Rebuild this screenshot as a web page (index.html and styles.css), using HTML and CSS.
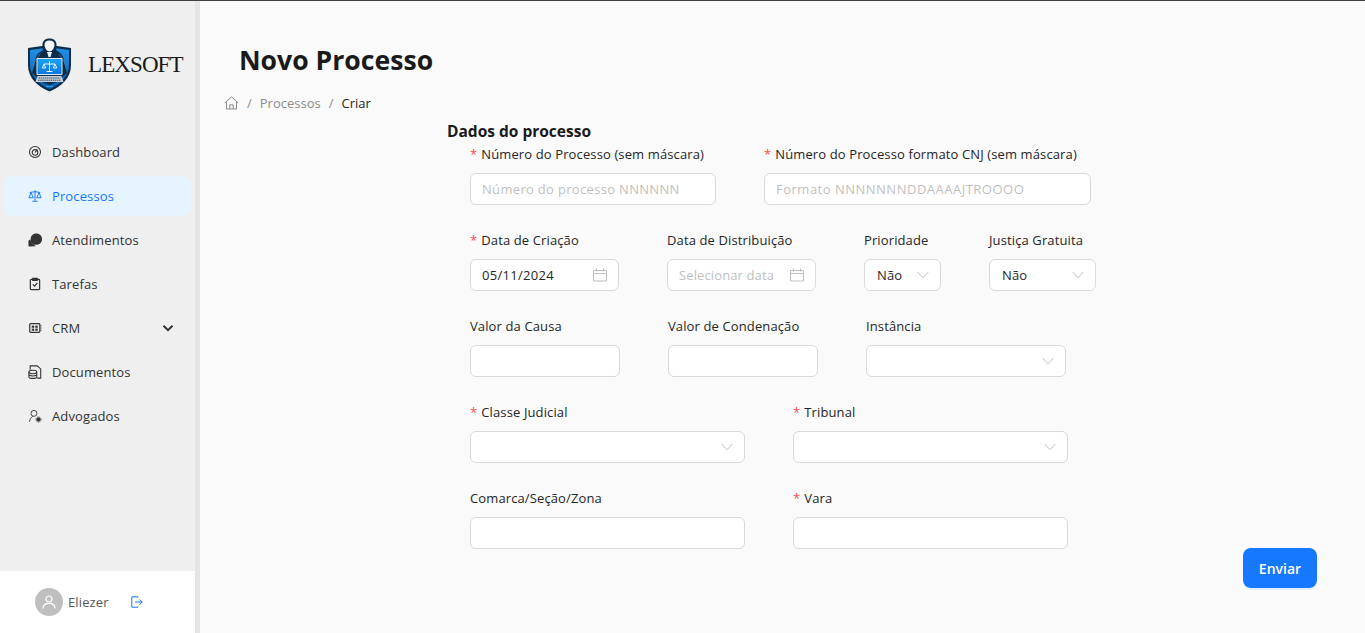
FILE: index.html
```html
<!DOCTYPE html>
<html lang="pt-BR">

<head>
    <meta charset="UTF-8">
    <meta name="viewport" content="width=device-width, initial-scale=1.0">
    <title>Novo Processo</title>
    <link rel="stylesheet" href="styles.css">
</head>

<body>
    <aside class="sidebar">
        <div class="logo">
            <svg class="logo-mark" width="45" height="54" viewBox="0 0 45 54">
                <defs>
                    <linearGradient id="shieldFill" x1="0" y1="0" x2="0" y2="1">
                        <stop offset="0" stop-color="#1f8fe6" />
                        <stop offset="1" stop-color="#0b5ea8" />
                    </linearGradient>
                    <linearGradient id="screenFill" x1="0" y1="0" x2="0" y2="1">
                        <stop offset="0" stop-color="#19a3f5" />
                        <stop offset="1" stop-color="#0a78e0" />
                    </linearGradient>
                </defs>
                <path d="M1 10 L15 8 L30 8 L44 10 L44 27 C44 40 34 49 22.500 53.500 C11 49 1 40 1 27 Z" fill="#0d2c4a" />
                <path d="M3 12 L14 10.500 L31 10.500 L42 12 L42 27 C42 38 33 46.500 22.500 51 C12 46.500 3 38 3 27 Z" fill="url(#shieldFill)" />
                <path d="M8 25 C8 18 11 14 17 12 L28 12 C34 14 37 18 37 25 L40 35 L30 44 L22.500 47 L15 44 L5 35 Z" fill="#0d2c4a" />
                <path d="M15.500 8 C15 3 18 0.500 22.500 0.500 C27 0.500 30 3 29.500 8 L29 15 L16 15 Z" fill="#0d2c4a" />
                <path d="M17.500 7 C17.300 4 19 2.500 22.500 2.500 C26 2.500 27.700 4 27.500 7 C27.300 10 25 13.500 22.500 13.500 C20 13.500 17.700 10 17.500 7 Z" fill="#f4f7fa" />
                <path d="M20 14 L25 14 L23.500 19 L21.500 19 Z" fill="#e8eef3" />
                <path d="M13 16 L5.500 27 M32 16 L39.500 27" stroke="#5d7f9b" stroke-width="0.700" />
                <rect x="9.500" y="20" width="26" height="17" rx="1" fill="#dfeaf3" />
                <rect x="10.500" y="21" width="24" height="15" fill="url(#screenFill)" />
                <path d="M22.500 23 V33 M17 26 H28 M15.300 30 L17 26 L18.700 30 Z M26.300 30 L28 26 L29.700 30 Z M19.500 33.500 H25.500" stroke="#fff" stroke-width="0.900" fill="none" />
                <path d="M10.500 38 H34.500 L36.500 44 H8.500 Z" fill="#c9d3dc" />
                <path d="M11.500 40 H33.500 M11 42.200 H34" stroke="#22384e" stroke-width="0.900" stroke-dasharray="1.500 0.600" />
                <path d="M19 48.500 H26" stroke="#2aa0f0" stroke-width="1.200" />
            </svg>
            <span class="logo-text">LEXSOFT</span>
        </div>

        <nav class="menu">
            <a class="menu-item" href="#">
                <svg class="menu-icon" viewBox="0 0 16 16" fill="none" stroke="currentColor" stroke-width="1.200">
                    <circle cx="8" cy="8" r="6.300" />
                    <circle cx="8" cy="8.500" r="3.200" />
                    <path d="M8 8.500 L10.500 5" />
                </svg>
                <span>Dashboard</span>
            </a>
            <a class="menu-item active" href="#">
                <svg class="menu-icon" viewBox="0 0 16 16" fill="none" stroke="currentColor" stroke-width="1.100">
                    <path d="M8 1.500 V13.500 M5 14 H11 M2 4 L8 3 L14 4" />
                    <path d="M3.500 4 L1 10 H6 Z M12.500 4 L10 10 H15 Z" />
                </svg>
                <span>Processos</span>
            </a>
            <a class="menu-item" href="#">
                <svg class="menu-icon" viewBox="0 0 16 16" fill="currentColor">
                    <path d="M9.500 0.500 C13.500 0.500 16 3.500 16 7 C16 10.800 13 13.300 9.500 13.300 L8 13.300 C5 13.300 3 10.300 3 7 C3 3.500 5.500 0.500 9.500 0.500 Z" />
                    <path d="M0.500 9.500 C0.500 8.500 1.500 7.800 2.500 7.800 L5 12 L9 15 L1.500 15.500 C0.800 15.500 0.500 15 0.500 14.400 Z" />
                </svg>
                <span>Atendimentos</span>
            </a>
            <a class="menu-item" href="#">
                <svg class="menu-icon" viewBox="0 0 16 16" fill="none" stroke="currentColor" stroke-width="1.400">
                    <rect x="2.700" y="2.700" width="10.600" height="11.800" rx="1" />
                    <path d="M5.500 1.500 H10.500 V3.800 H5.500 Z" fill="currentColor" />
                    <path d="M5.500 8.500 L7.500 10.500 L10.700 6.800" />
                </svg>
                <span>Tarefas</span>
            </a>
            <a class="menu-item" href="#">
                <svg class="menu-icon" viewBox="0 0 16 16" fill="none" stroke="currentColor" stroke-width="1.400">
                    <rect x="2" y="3" width="11.500" height="10" rx="1" />
                    <path d="M14 5.500 H15.500 M14 8 H15.500 M14 10.500 H15.500" stroke-width="1" />
                    <rect x="4.300" y="5.300" width="2.800" height="2.400" fill="currentColor" stroke="none" />
                    <rect x="8.300" y="5.300" width="2.800" height="2.400" fill="currentColor" stroke="none" />
                    <rect x="4.300" y="8.700" width="2.800" height="2.400" fill="currentColor" stroke="none" />
                    <rect x="8.300" y="8.700" width="2.800" height="2.400" fill="currentColor" stroke="none" />
                </svg>
                <span>CRM</span>
                <svg class="menu-arrow" width="12" height="12" viewBox="0 0 12 12" fill="none" stroke="currentColor" stroke-width="2">
                    <path d="M1.500 3.800 L6 8.200 L10.500 3.800" />
                </svg>
            </a>
            <a class="menu-item" href="#">
                <svg class="menu-icon" viewBox="0 0 16 16" fill="none" stroke="currentColor" stroke-width="1.200">
                    <path d="M2.500 5.500 V1 H10.500 L14.500 4.500 V15 H10.500" />
                    <ellipse cx="5.500" cy="8" rx="4.500" ry="1.900" />
                    <path d="M1 8 V13.300 C1 14.500 3 15.300 5.500 15.300 C8 15.300 10 14.500 10 13.300 V8 M1 10.700 C1 11.900 3 12.600 5.500 12.600 C8 12.600 10 11.900 10 10.700" />
                </svg>
                <span>Documentos</span>
            </a>
            <a class="menu-item" href="#">
                <svg class="menu-icon" viewBox="0 0 16 16" fill="none" stroke="currentColor" stroke-width="1">
                    <circle cx="6.800" cy="5" r="3.400" />
                    <path d="M1.800 14.500 C2 11.500 3.500 9.500 5.500 8.500" />
                    <circle cx="12" cy="12" r="2" fill="currentColor" />
                    <circle cx="12" cy="12" r="3" stroke-dasharray="1 1" />
                </svg>
                <span>Advogados</span>
            </a>
        </nav>

        <div class="user-box">
            <span class="avatar">
                <svg width="14" height="14" viewBox="0 0 14 14" fill="none" stroke="#fff" stroke-width="1.200">
                    <circle cx="7" cy="4" r="3" />
                    <path d="M1 13.500 C1 10 3.500 8.300 7 8.300 C10.500 8.300 13 10 13 13.500" />
                </svg>
            </span>
            <span class="user-name">Eliezer</span>
            <svg class="logout" width="12" height="12" viewBox="0 0 12 12" fill="none" stroke="#1677ff" stroke-width="1">
                <path d="M7 1.500 V0.800 H0.800 V11.200 H7 V10.500 M4 6 H11.200 M8.700 3.500 L11.200 6 L8.700 8.500" />
            </svg>
        </div>
    </aside>

    <main class="content">
        <h1 class="page-title">Novo Processo</h1>

        <div class="breadcrumb">
            <svg width="15" height="14" viewBox="0 0 15 14" fill="none" stroke="#8c8c8c" stroke-width="1">
                <path d="M0.700 7 L7.500 0.800 L14.300 7 M2.500 5.500 V13 H12.500 V5.500 M5.800 13 V8.800 H9.200 V13" />
            </svg>
            <span class="sep">/</span>
            <a href="#">Processos</a>
            <span class="sep">/</span>
            <span class="current">Criar</span>
        </div>

        <div class="form-area">
            <form class="process-form" action="#" method="post">
                <h2>Dados do processo</h2>
                <div class="form-fields">
                    <div class="form-row">
                        <div class="field w-246">
                            <label class="required">Número do Processo (sem máscara)</label>
                            <input class="ph-number" type="text" placeholder="Número do processo NNNNNN">
                        </div>
                        <div class="field w-327">
                            <label class="required">Número do Processo formato CNJ (sem máscara)</label>
                            <input class="ph-cnj" type="text" placeholder="Formato NNNNNNNDDAAAAJTROOOO">
                        </div>
                    </div>

                    <div class="form-row">
                        <div class="field w-149">
                            <label class="required">Data de Criação</label>
                            <div class="control date-control">
                                <span class="date-value">05/11/2024</span>
                                <svg class="calendar" width="14" height="14" viewBox="0 0 14 14" fill="none" stroke="#bfbfbf" stroke-width="1">
                                    <path d="M0.500 2.500 H13.500 V13 H0.500 Z M0.500 5.500 H13.500 M3.500 0.500 V3.500 M10.500 0.500 V3.500" />
                                </svg>
                            </div>
                        </div>
                        <div class="field w-149">
                            <label>Data de Distribuição</label>
                            <div class="control date-control">
                                <span class="placeholder">Selecionar data</span>
                                <svg class="calendar" width="14" height="14" viewBox="0 0 14 14" fill="none" stroke="#bfbfbf" stroke-width="1">
                                    <path d="M0.500 2.500 H13.500 V13 H0.500 Z M0.500 5.500 H13.500 M3.500 0.500 V3.500 M10.500 0.500 V3.500" />
                                </svg>
                            </div>
                        </div>
                        <div class="field w-77">
                            <label>Prioridade</label>
                            <div class="control">
                                <span>Não</span>
                                <svg class="chevron" width="12" height="8" viewBox="0 0 12 8" fill="none" stroke="#bfbfbf" stroke-width="1">
                                    <path d="M0.700 1 L6 6.800 L11.300 1" />
                                </svg>
                            </div>
                        </div>
                        <div class="field w-107">
                            <label>Justiça Gratuita</label>
                            <div class="control">
                                <span>Não</span>
                                <svg class="chevron" width="12" height="8" viewBox="0 0 12 8" fill="none" stroke="#bfbfbf" stroke-width="1">
                                    <path d="M0.700 1 L6 6.800 L11.300 1" />
                                </svg>
                            </div>
                        </div>
                    </div>

                    <div class="form-row">
                        <div class="field w-150">
                            <label>Valor da Causa</label>
                            <input type="text">
                        </div>
                        <div class="field w-150">
                            <label>Valor de Condenação</label>
                            <input type="text">
                        </div>
                        <div class="field w-200">
                            <label>Instância</label>
                            <div class="control">
                                <span></span>
                                <svg class="chevron" width="12" height="8" viewBox="0 0 12 8" fill="none" stroke="#bfbfbf" stroke-width="1">
                                    <path d="M0.700 1 L6 6.800 L11.300 1" />
                                </svg>
                            </div>
                        </div>
                    </div>

                    <div class="form-row">
                        <div class="field w-275">
                            <label class="required">Classe Judicial</label>
                            <div class="control">
                                <span></span>
                                <svg class="chevron" width="12" height="8" viewBox="0 0 12 8" fill="none" stroke="#bfbfbf" stroke-width="1">
                                    <path d="M0.700 1 L6 6.800 L11.300 1" />
                                </svg>
                            </div>
                        </div>
                        <div class="field w-275">
                            <label class="required">Tribunal</label>
                            <div class="control">
                                <span></span>
                                <svg class="chevron" width="12" height="8" viewBox="0 0 12 8" fill="none" stroke="#bfbfbf" stroke-width="1">
                                    <path d="M0.700 1 L6 6.800 L11.300 1" />
                                </svg>
                            </div>
                        </div>
                    </div>

                    <div class="form-row">
                        <div class="field w-275">
                            <label>Comarca/Seção/Zona</label>
                            <input type="text">
                        </div>
                        <div class="field w-275">
                            <label class="required">Vara</label>
                            <input type="text">
                        </div>
                    </div>
                </div>
            </form>

            <button class="submit-btn" type="submit">Enviar</button>
        </div>
    </main>
</body>

</html>
```

FILE: styles.css
```css
* {
    margin: 0;
    padding: 0;
    box-sizing: border-box;
}

html,
body {
    height: 100%;
}

body {
    display: flex;
    height: 633px;
    overflow: hidden;
    border-top: 1px solid #3f3f3f;
    background-color: #fafafa;
    font-family: "Open Sans", "Liberation Sans", sans-serif;
    font-size: 13px;
    line-height: 22px;
    letter-spacing: 0.12px;
    color: #262626;
}

a {
    text-decoration: none;
    color: inherit;
}

/* sidebar */
.sidebar {
    display: flex;
    flex-direction: column;
    flex: 0 0 200px;
    width: 200px;
    background-color: #efefef;
    border-right: 5px solid #e5e5e5;
}

.logo {
    display: flex;
    align-items: center;
    height: 127px;
    padding-left: 27px;
}

.logo-mark {
    flex-shrink: 0;
}

.logo-text {
    margin-left: 16px;
    font-family: "Liberation Serif", serif;
    font-size: 23px;
    letter-spacing: -0.9px;
    color: #1a1a1a;
}

.menu {
    flex: 1;
}

.menu-item {
    display: flex;
    align-items: center;
    height: 40px;
    margin: 4px;
    padding-left: 24px;
    border-radius: 8px;
    color: #333;
}

.menu-item.active {
    background-color: #e6f4ff;
    color: #1677ff;
}

.menu-icon {
    flex: 0 0 14px;
    width: 14px;
    height: 14px;
    margin-right: 10px;
}

.menu-arrow {
    margin-left: auto;
    margin-right: 17px;
}

.user-box {
    display: flex;
    align-items: center;
    height: 62px;
    padding-left: 35px;
    background-color: #fff;
    color: #595959;
}

.avatar {
    display: flex;
    align-items: center;
    justify-content: center;
    width: 28px;
    height: 28px;
    border-radius: 50%;
    background-color: #bfbfbf;
}

.user-name {
    margin-left: 5px;
}

.logout {
    margin-left: 22px;
}

/* main */
.content {
    flex: 1;
    display: flex;
    flex-direction: column;
    padding-left: 24px;
}

.page-title {
    margin: 38px 0 0 15px;
    font-size: 26.6px;
    line-height: 42px;
    font-weight: 700;
    letter-spacing: 0;
    color: #1a1a1a;
}

.breadcrumb {
    display: flex;
    align-items: center;
    height: 22px;
    margin-top: 11px;
    letter-spacing: 0;
    color: #8c8c8c;
}

.breadcrumb .sep {
    margin: 0 8px;
}

.breadcrumb .current {
    color: #262626;
}

.form-area {
    display: flex;
    align-items: flex-end;
    justify-content: space-between;
    padding-right: 48px;
}

.process-form {
    margin-left: 223px;
    margin-top: 6px;
}

.process-form h2 {
    font-size: 15.5px;
    line-height: 22px;
    font-weight: 700;
    letter-spacing: 0;
    color: #1a1a1a;
}

.form-fields {
    padding-left: 23px;
    margin-top: 1px;
}

.form-row {
    display: flex;
    gap: 48px;
    margin-bottom: 24px;
}

.field label {
    display: block;
    padding-bottom: 8px;
    white-space: nowrap;
    color: #262626;
}

.required::before {
    content: "*";
    margin-right: 4px;
    color: #ff4d4f;
}

.field input,
.control {
    display: flex;
    align-items: center;
    justify-content: space-between;
    width: 100%;
    height: 32px;
    padding: 0 12px;
    border: 1px solid #d9d9d9;
    border-radius: 6px;
    background-color: #fff;
    font-family: inherit;
    font-size: 13px;
    color: #262626;
    outline: none;
}

.field input,
.date-control {
    padding: 0 11px;
}

.field input::placeholder,
.placeholder {
    color: #bfbfbf;
}

.ph-number::placeholder {
    letter-spacing: 0.32px;
}

.ph-cnj::placeholder {
    letter-spacing: 0.5px;
}

.date-value {
    letter-spacing: 0.3px;
}

.calendar,
.chevron {
    flex-shrink: 0;
}

.chevron {
    margin-right: -1px;
}

.w-77 {
    width: 77px;
}

.w-107 {
    width: 107px;
}

.w-149 {
    width: 149px;
}

.w-150 {
    width: 150px;
}

.w-200 {
    width: 200px;
}

.w-246 {
    width: 246px;
}

.w-275 {
    width: 275px;
}

.w-327 {
    width: 327px;
}

.submit-btn {
    width: 74px;
    height: 40px;
    margin-bottom: -15px;
    border: none;
    border-radius: 8px;
    background-color: #1677ff;
    box-shadow: 0 2px 0 rgba(5, 145, 255, 0.1);
    font-family: inherit;
    font-size: 14px;
    font-weight: 600;
    letter-spacing: 0;
    color: #fff;
    cursor: pointer;
}
```
